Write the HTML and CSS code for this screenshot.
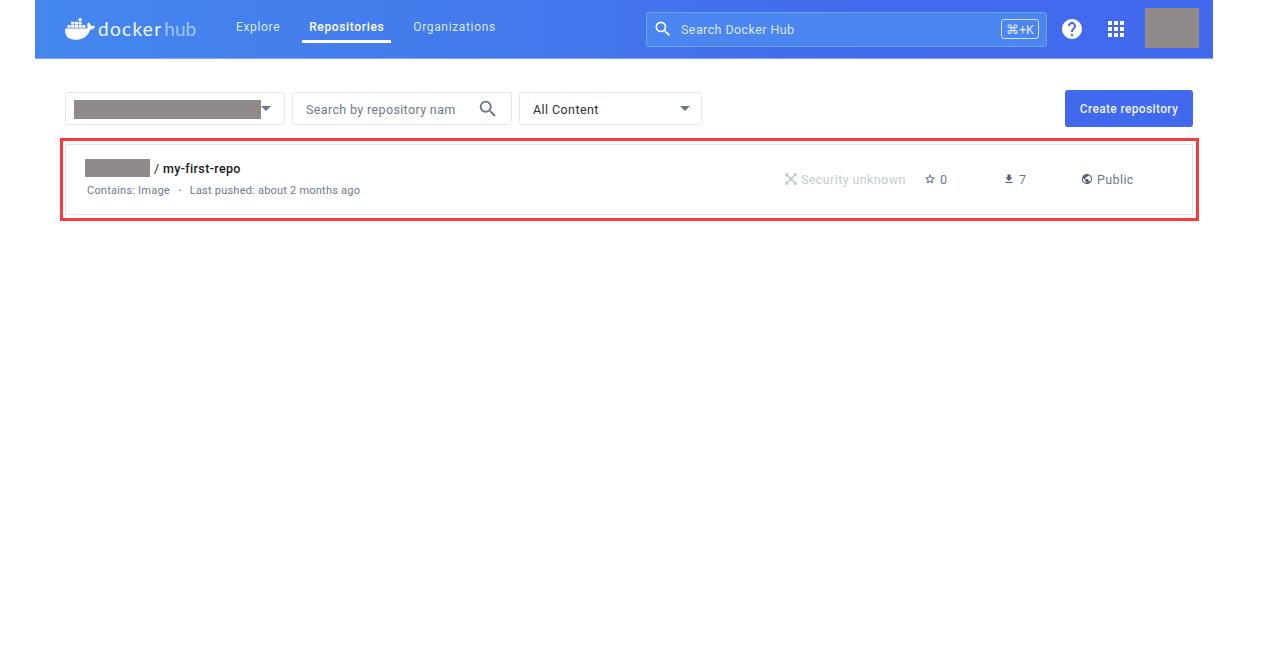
FILE: index.html
```html
<!DOCTYPE html>
<html lang="en">
<head>
<meta charset="utf-8">
<title>Docker Hub</title>
<link rel="stylesheet" href="styles.css">
</head>
<body>
<div class="app">
  <header class="topbar">
    <div class="logo">
      <svg class="whale" viewBox="0 0 24 24" fill="#fff"><path d="M13.983 11.078h2.119a.186.186 0 00.186-.185V9.006a.186.186 0 00-.186-.186h-2.119a.185.185 0 00-.185.185v1.888c0 .102.083.185.185.185m-2.954-5.43h2.118a.186.186 0 00.186-.186V3.574a.186.186 0 00-.186-.185h-2.118a.185.185 0 00-.185.185v1.888c0 .102.082.185.185.186m0 2.716h2.118a.187.187 0 00.186-.186V6.29a.186.186 0 00-.186-.185h-2.118a.185.185 0 00-.185.185v1.887c0 .102.082.185.185.186m-2.93 0h2.12a.186.186 0 00.184-.186V6.29a.185.185 0 00-.185-.185H8.1a.185.185 0 00-.185.185v1.887c0 .102.083.185.185.186m-2.964 0h2.119a.186.186 0 00.185-.186V6.29a.185.185 0 00-.185-.185H5.136a.186.186 0 00-.186.185v1.887c0 .102.084.185.186.186m5.893 2.715h2.118a.186.186 0 00.186-.185V9.006a.186.186 0 00-.186-.186h-2.118a.185.185 0 00-.185.185v1.888c0 .102.082.185.185.185m-2.93 0h2.12a.185.185 0 00.184-.185V9.006a.185.185 0 00-.184-.186h-2.12a.185.185 0 00-.184.185v1.888c0 .102.083.185.185.185m-2.964 0h2.119a.185.185 0 00.185-.185V9.006a.185.185 0 00-.184-.186h-2.12a.186.186 0 00-.186.186v1.887c0 .102.084.185.186.185m-2.92 0h2.12a.185.185 0 00.184-.185V9.006a.185.185 0 00-.184-.186h-2.12a.185.185 0 00-.184.185v1.888c0 .102.082.185.185.185M23.763 9.89c-.065-.051-.672-.51-1.954-.51-.338.001-.676.03-1.01.087-.248-1.7-1.653-2.53-1.716-2.566l-.344-.199-.226.327c-.284.438-.49.922-.612 1.43-.23.97-.09 1.882.403 2.661-.595.332-1.55.413-1.744.42H.751a.751.751 0 00-.75.748 11.376 11.376 0 00.692 4.062c.545 1.428 1.355 2.48 2.41 3.124 1.18.723 3.1 1.137 5.275 1.137.983.003 1.963-.086 2.93-.266a12.248 12.248 0 003.823-1.389c.98-.567 1.86-1.288 2.61-2.136 1.252-1.418 1.998-2.997 2.553-4.4h.221c1.372 0 2.215-.549 2.68-1.009.309-.293.55-.65.707-1.046l.098-.288Z"/></svg>
      <span class="logo-text">docker<span class="logo-hub">hub</span></span>
    </div>
    <nav class="nav">
      <a class="nav-item">Explore</a>
      <a class="nav-item nav-active">Repositories</a>
      <a class="nav-item">Organizations</a>
    </nav>
    <div class="global-search">
      <svg class="icon-search-top" viewBox="0 0 24 24" fill="#fff"><path d="M15.5 14h-.79l-.28-.27A6.471 6.471 0 0 0 16 9.5 6.5 6.5 0 1 0 9.5 16c1.61 0 3.09-.59 4.23-1.57l.27.28v.79l5 4.99L20.49 19l-4.99-5zm-6 0C7.01 14 5 11.99 5 9.5S7.01 5 9.5 5 14 7.01 14 9.5 11.99 14 9.5 14z"/></svg>
      <span class="global-search-text">Search Docker Hub</span>
      <span class="kbd">⌘+K</span>
    </div>
    <svg class="icon-help" viewBox="0 0 24 24" fill="#fff"><path d="M12 2C6.48 2 2 6.48 2 12s4.48 10 10 10 10-4.48 10-10S17.52 2 12 2zm1 17h-2v-2h2v2zm2.07-7.75l-.9.92C13.45 12.9 13 13.5 13 15h-2v-.5c0-1.1.45-2.1 1.17-2.83l1.24-1.26c.37-.36.59-.86.59-1.41 0-1.1-.9-2-2-2s-2 .9-2 2H8c0-2.21 1.79-4 4-4s4 1.79 4 4c0 .88-.36 1.68-.93 2.25z"/></svg>
    <svg class="icon-apps" viewBox="0 0 24 24" fill="#fff"><path d="M4 8h4V4H4v4zm6 12h4v-4h-4v4zm-6 0h4v-4H4v4zm0-6h4v-4H4v4zm6 0h4v-4h-4v4zm6-10v4h4V4h-4zm-6 4h4V4h-4v4zm6 6h4v-4h-4v4zm0 6h4v-4h-4v4z"/></svg>
    <div class="avatar"></div>
  </header>

  <main class="content">
    <div class="toolbar">
      <div class="field field-org">
        <span class="redact redact-org"></span>
        <span class="caret"></span>
      </div>
      <div class="field field-search">
        <span class="field-placeholder">Search by repository nam</span>
        <svg class="icon-search" viewBox="0 0 24 24" fill="#65758f"><path d="M15.5 14h-.79l-.28-.27A6.471 6.471 0 0 0 16 9.5 6.5 6.5 0 1 0 9.5 16c1.61 0 3.09-.59 4.23-1.57l.27.28v.79l5 4.99L20.49 19l-4.99-5zm-6 0C7.01 14 5 11.99 5 9.5S7.01 5 9.5 5 14 7.01 14 9.5 11.99 14 9.5 14z"/></svg>
      </div>
      <div class="field field-filter">
        <span class="field-value">All Content</span>
        <span class="caret"></span>
      </div>
      <button class="create-btn">Create repository</button>
    </div>

    <div class="highlight">
      <div class="repo-card">
        <div class="repo-main">
          <div class="repo-title">
            <span class="redact redact-owner"></span>
            <span class="repo-name"><span class="repo-slash">/</span> my-first-repo</span>
          </div>
          <div class="repo-meta">
            <span>Contains: Image</span>
            <span class="dot">•</span>
            <span>Last pushed: about 2 months ago</span>
          </div>
        </div>
        <div class="stat stat-security">
          <svg class="stat-icon" viewBox="0 0 12 12" fill="none" stroke="#c3cad6" stroke-width="1.6"><path d="M1.5 1.5l9 9M10.5 1.5l-9 9M3.5 1H1v2.5M8.5 1H11v2.5M1 8.5V11h2.5M11 8.5V11H8.5"/><circle cx="6" cy="6" r="1.8" fill="#c3cad6" stroke="none"/></svg>
          <span>Security unknown</span>
        </div>
        <div class="stat stat-stars">
          <svg class="stat-icon" viewBox="0 0 24 24" fill="#4f5e75"><path d="M22 9.24l-7.19-.62L12 2 9.19 8.63 2 9.24l5.46 4.73L5.82 21 12 17.27 18.18 21l-1.63-7.03L22 9.24zM12 15.4l-3.76 2.27 1-4.28-3.32-2.88 4.38-.38L12 6.1l1.71 4.04 4.38.38-3.32 2.88 1 4.28L12 15.4z"/></svg>
          <span>0</span>
        </div>
        <div class="stat stat-pulls">
          <svg class="stat-icon" viewBox="0 0 24 24" fill="#4f5e75"><path d="M19 9h-4V3H9v6H5l7 7 7-7zM5 18v2h14v-2H5z"/></svg>
          <span>7</span>
        </div>
        <div class="stat stat-public">
          <svg class="stat-icon" viewBox="0 0 24 24" fill="#4f5e75"><path d="M12 2C6.48 2 2 6.48 2 12s4.48 10 10 10 10-4.48 10-10S17.52 2 12 2zm-1 17.93c-3.95-.49-7-3.85-7-7.93 0-.62.08-1.21.21-1.79L9 15v1c0 1.1.9 2 2 2v1.93zm6.9-2.54c-.26-.81-1-1.39-1.9-1.39h-1v-3c0-.55-.45-1-1-1H8v-2h2c.55 0 1-.45 1-1V7h2c1.1 0 2-.9 2-2v-.41c2.93 1.19 5 4.06 5 7.41 0 2.08-.8 3.97-2.1 5.39z"/></svg>
          <span>Public</span>
        </div>
      </div>
    </div>
  </main>
</div>
</body>
</html>
```

FILE: styles.css
```css
* { box-sizing: border-box; }

html, body { margin: 0; padding: 0; background: #fff; }

body {
  font-family: Roboto, "Liberation Sans", sans-serif;
  color: #17191e;
  height: 670px;
  overflow: hidden;
}

.app {
  width: 1178px;
  margin-left: 35px;
}

.topbar {
  display: flex;
  align-items: center;
  height: 59px;
  padding: 0 14px 1px 30px;
  background: linear-gradient(90deg, #4487ed 0%, #4479ec 40%, #416bee 70%, #4169ee 100%);
  border-bottom: 1px solid #7aa7f3;
}

.logo {
  display: flex;
  align-items: center;
  gap: 3px;
  width: 171px;
  flex: none;
}

.whale { width: 30px; height: 30px; flex: none; }

.logo-text {
  font-family: Lato, sans-serif;
  font-weight: 400;
  font-size: 19px;
  letter-spacing: 1.3px;
  color: #f2f6fe;
}

.logo-hub { margin-left: 2px; letter-spacing: 0; color: #a3c4f7; }

.nav {
  display: flex;
  gap: 22px;
  height: 58px;
}

.nav-item {
  display: flex;
  align-items: center;
  height: 43px;
  padding: 15px 0 0;
  font-size: 12px;
  letter-spacing: 0.65px;
  color: #dbe7fb;
  border-bottom: 3px solid transparent;
}

.nav-active {
  padding: 15px 7px 0;
  font-weight: 500;
  color: #fff;
  border-bottom-color: #fff;
}

.global-search {
  display: flex;
  align-items: center;
  width: 401px;
  height: 35px;
  margin-left: auto;
  margin-top: 1px;
  padding: 0 7px 0 6px;
  background: #4b85ef;
  border: 1px solid #6f9ff3;
  border-radius: 3px;
}

.icon-search-top { width: 20px; height: 20px; flex: none; }

.global-search-text {
  flex: 1;
  margin-left: 8px;
  font-size: 12.5px;
  letter-spacing: 0.42px;
  color: #dbe7fb;
}

.kbd {
  display: flex;
  align-items: center;
  justify-content: center;
  width: 38px;
  height: 20px;
  border: 1px solid #d0e0fb;
  border-radius: 3px;
  color: #e6eefd;
  font-size: 12.5px;
}

.icon-help { width: 24px; height: 24px; margin-left: 13px; flex: none; }
.icon-apps { width: 24px; height: 24px; margin-left: 20px; flex: none; }

.avatar {
  width: 54px;
  height: 40px;
  margin-left: 17px;
  margin-bottom: 2px;
  flex: none;
  background: #908a8b;
}

.content {
  padding: 31px 20px 0 25px;
}

.toolbar {
  display: flex;
  align-items: center;
  gap: 7px;
  padding-left: 5px;
  height: 37px;
  margin-bottom: 11px;
}

.field {
  display: flex;
  align-items: center;
  height: 33px;
  background: #fff;
  border: 1px solid #e4e7eb;
  border-radius: 3px;
}

.field-org { width: 220px; padding: 0 13px 0 8px; }
.field-search { width: 220px; padding: 0 12px 0 13px; }
.field-filter { width: 183px; padding: 0 11px 0 13px; }

.redact { display: block; background: #908a8b; }
.redact-org { width: 188px; height: 19px; margin-top: 1px; }
.redact-owner { width: 65px; height: 18px; }

.caret {
  width: 0;
  height: 0;
  margin-left: auto;
  border-left: 5px solid transparent;
  border-right: 5px solid transparent;
  border-top: 5px solid #65758f;
}

.field-placeholder {
  flex: none;
  width: 149px;
  padding-top: 1px;
  overflow: hidden;
  white-space: nowrap;
  font-size: 12.5px;
  letter-spacing: 0.36px;
  color: #6c7a90;
}

.icon-search { width: 22px; height: 22px; margin-left: auto; flex: none; }

.field-value {
  padding-top: 1px;
  font-size: 12.5px;
  letter-spacing: 0.42px;
  color: #2b2f36;
}

.create-btn {
  width: 128px;
  height: 37px;
  margin-left: auto;
  padding: 0;
  border: 0;
  border-radius: 3px;
  background: #4069ee;
  color: #eef2fe;
  font-family: inherit;
  font-size: 12px;
  font-weight: 500;
  letter-spacing: 0.35px;
}

.highlight {
  width: 1139px;
  height: 83px;
  padding: 3px 3px 3px 2px;
  border: 3px solid #f73a3c;
}

.repo-card {
  display: flex;
  align-items: center;
  height: 71px;
  width: 1128px;
  border: 1px solid #dfe4ea;
}

.repo-main {
  width: 719px;
  margin-bottom: 2px;
  padding-left: 19px;
}

.repo-title {
  display: flex;
  align-items: center;
  gap: 4px;
  height: 18px;
}

.repo-name {
  font-size: 12.5px;
  font-weight: 500;
  letter-spacing: 0.35px;
  color: #17191e;
}

.repo-slash { font-weight: 400; }

.repo-meta {
  display: flex;
  margin-top: 7px;
  padding-left: 2px;
  font-size: 11px;
  letter-spacing: 0.22px;
  color: #6c7a90;
}

.dot { margin: 0 8.5px; font-size: 8px; line-height: 14px; }

.stat {
  display: flex;
  align-items: center;
  margin-bottom: 1px;
  font-size: 12.5px;
  letter-spacing: 0.4px;
  color: #6c7a90;
}

.stat-icon { width: 12px; height: 12px; flex: none; margin-right: 4px; }

.stat-security { width: 139px; color: #c3cad6; }
.stat-stars { width: 79px; }
.stat-pulls { width: 78px; }
.stat-public { width: 70px; }
```
